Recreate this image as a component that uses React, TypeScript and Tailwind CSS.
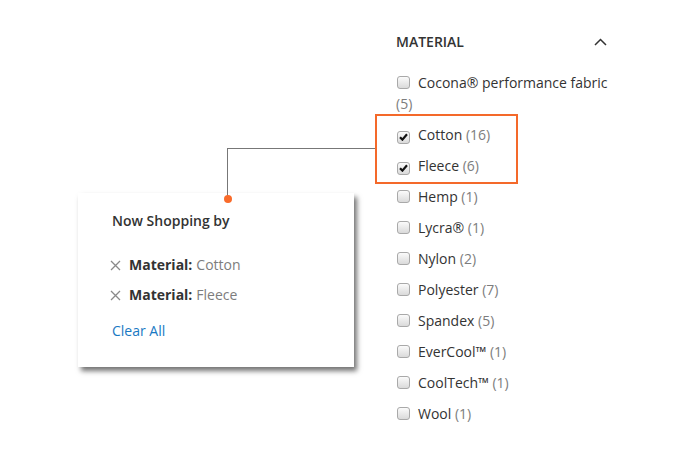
const options = [
  { name: "Hemp", count: 1 },
  { name: "Lycra®", count: 1 },
  { name: "Nylon", count: 2 },
  { name: "Polyester", count: 7 },
  { name: "Spandex", count: 5 },
  { name: "EverCool™", count: 1 },
  { name: "CoolTech™", count: 1 },
  { name: "Wool", count: 1 },
];

const Box = ({ checked = false }: { checked?: boolean }) => (
  <span className="inline-flex items-center justify-center w-[13px] h-[13px] mr-[8px] ml-[1px] align-[-1px] rounded-[3px] border border-[#a9a9a9] bg-gradient-to-b from-[#fbfbfb] to-[#dadada]">
    {checked && (
      <svg width="9" height="8" viewBox="0 0 9 8">
        <path d="M1 4.2 L3.4 6.6 L8 1.2" fill="none" stroke="#111" strokeWidth="2.2" />
      </svg>
    )}
  </span>
);

const Option = ({ name, count, checked }: { name: string; count: number; checked?: boolean }) => (
  <label className="block leading-[21px] text-[14px] text-[#333]">
    <Box checked={checked} />
    {name} <span className="text-[#7d7d7d]">({count})</span>
  </label>
);

const Chip = ({ value }: { value: string }) => (
  <div className="flex items-center leading-[20px] text-[14px]">
    <svg width="11" height="11" viewBox="0 0 11 11" className="mr-[8px] -ml-[2px]">
      <path d="M1 1 L10 10 M10 1 L1 10" stroke="#8a8a8a" strokeWidth="1.3" />
    </svg>
    <span className="font-bold text-[#333]">Material:</span>
    <span className="ml-[4px] text-[#7d7d7d]">{value}</span>
  </div>
);

export default function App() {
  return (
    <div className="relative w-[700px] h-[450px] bg-white overflow-hidden flex items-start font-['Open_Sans',sans-serif]">
      {/* connector */}
      <div className="absolute left-[227px] top-[148px] w-[148px] h-[51px] border-l border-t border-[#777]" />
      <div className="absolute left-[224px] top-[195px] w-[8px] h-[8px] rounded-full bg-[#f96b2a]" />

      <div className="ml-[78px] mt-[193px] w-[276px] h-[174px] bg-white shadow-[3px_4px_5px_rgba(0,0,0,0.55)] pl-[34px] pt-[18px]">
        <div className="text-[14px] leading-[20px] font-semibold text-[#333]">Now Shopping by</div>
        <div className="mt-[24px] flex flex-col gap-[10px]">
          <Chip value="Cotton" />
          <Chip value="Fleece" />
        </div>
        <a className="block mt-[16px] text-[14px] leading-[20px] text-[#1979c3]">Clear All</a>
      </div>

      <div className="ml-[42px] mt-[32px] w-[214px]">
        <div className="flex items-center justify-between leading-[20px]">
          <span className="text-[14px] font-semibold text-[#333] uppercase">Material</span>
          <svg width="13" height="8" viewBox="0 0 13 8" className="mr-[3px]">
            <path d="M1 7 L6.5 1.5 L12 7" fill="none" stroke="#333" strokeWidth="1.5" />
          </svg>
        </div>
        <div className="mt-[19.5px] flex flex-col gap-[10px]">
          <Option name="Cocona® performance fabric" count={5} />
          <div className="-mt-[10px] -mb-[7.5px] -ml-[21px] w-[143px] border-2 border-[#f4692a] pl-[19px] pt-[8.5px] pb-[5.5px] flex flex-col gap-[10px]">
            <Option name="Cotton" count={16} checked />
            <Option name="Fleece" count={6} checked />
          </div>
          {options.map((o) => (
            <Option key={o.name} name={o.name} count={o.count} />
          ))}
        </div>
      </div>
    </div>
  );
}
